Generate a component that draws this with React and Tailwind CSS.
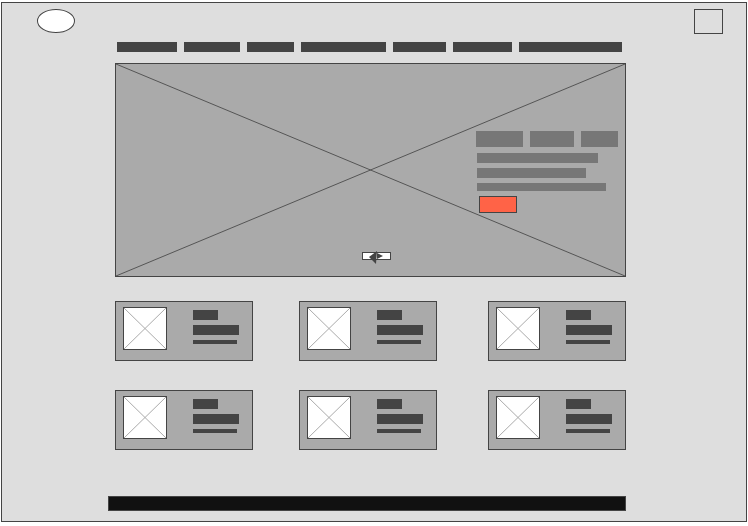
import React from "react";

function Cross({ stroke = "#555" }) {
  return (
    <svg className="absolute inset-0 h-full w-full" preserveAspectRatio="none" viewBox="0 0 100 100">
      <line x1="0" y1="0" x2="100" y2="100" stroke={stroke} strokeWidth="1" vectorEffect="non-scaling-stroke" />
      <line x1="100" y1="0" x2="0" y2="100" stroke={stroke} strokeWidth="1" vectorEffect="non-scaling-stroke" />
    </svg>
  );
}

function Card({ className = "" }) {
  return (
    <div className={`flex h-[60px] w-[138px] border border-[#444] bg-[#aaaaaa] ${className}`}>
      <div className="relative ml-[7px] mt-[5px] h-[43px] w-[44px] border border-[#444] bg-white">
        <Cross stroke="#aaa" />
      </div>
      <div className="ml-[26px] mt-[8px] flex flex-col">
        <div className="h-[10px] w-[25px] bg-[#444]" />
        <div className="mt-[5px] h-[10px] w-[46px] bg-[#444]" />
        <div className="mt-[5px] h-[4px] w-[44px] bg-[#444]" />
      </div>
    </div>
  );
}

const navWidths = ["w-[60px]", "w-[56px]", "w-[47px]", "w-[85px]", "w-[53px]", "w-[59px]", "w-[103px]"];

export default function App() {
  return (
    <div className="h-[526px] w-[748px] overflow-hidden bg-white pt-[2px] pl-[1px] font-['Liberation_Sans',sans-serif]">
      <div className="flex h-[520px] w-[746px] flex-col border border-[#444] bg-[#dedede]">
        {/* header */}
        <div className="flex items-start justify-between pl-[35px] pr-[23px] pt-[6px]">
          <div className="h-[24px] w-[38px] rounded-[50%] border border-[#444] bg-white" />
          <div className="h-[25px] w-[29px] border border-[#444]" />
        </div>

        <div className="ml-[113px] w-[511px]">
          {/* nav */}
          <div className="ml-[2px] mt-[8px] flex gap-[7px]">
            {navWidths.map((w, i) => (
              <div key={i} className={`h-[10px] bg-[#444] ${w}`} />
            ))}
          </div>

          {/* hero */}
          <div className="relative mt-[11px] h-[214px] w-[511px] border border-[#444] bg-[#aaaaaa]">
            <Cross stroke="#555" />
            <div className="relative ml-[360px] pt-[67px] flex flex-col">
              <div className="flex gap-[7px]">
                <div className="h-[16px] w-[47px] bg-[#777]" />
                <div className="h-[16px] w-[44px] bg-[#777]" />
                <div className="h-[16px] w-[37px] bg-[#777]" />
              </div>
              <div className="ml-[1px] mt-[6px] h-[10px] w-[121px] bg-[#777]" />
              <div className="ml-[1px] mt-[5px] h-[10px] w-[109px] bg-[#777]" />
              <div className="ml-[1px] mt-[5px] h-[8px] w-[129px] bg-[#777]" />
              <div className="ml-[3px] mt-[5px] h-[17px] w-[38px] border border-[#444] bg-[#ff6347]" />
            </div>
            <div className="absolute left-[246px] top-[188px] h-[8px] w-[29px] border border-[#444] bg-white">
              <svg className="absolute left-[-1px] top-[-1px] overflow-visible" width="29" height="13" viewBox="0 0 29 13">
                <polygon points="7,5 15,-1 14,12" fill="#444" />
                <polygon points="15,1 21,4 15,7" fill="#444" />
              </svg>
            </div>
          </div>

          {/* cards */}
          <div className="mt-[24px] flex">
            <Card />
            <Card className="ml-[46px]" />
            <Card className="ml-[51px]" />
          </div>
          <div className="mt-[29px] flex">
            <Card />
            <Card className="ml-[46px]" />
            <Card className="ml-[51px]" />
          </div>
        </div>

        {/* footer */}
        <div className="ml-[106px] mt-[46px] h-[15px] w-[518px] border border-[#444] bg-[#111]" />
      </div>
    </div>
  );
}
